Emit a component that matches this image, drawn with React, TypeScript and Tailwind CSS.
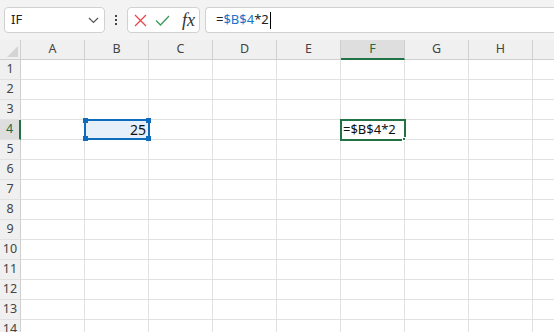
import React from 'react';

const cols = ['A', 'B', 'C', 'D', 'E', 'F', 'G', 'H', 'I'];
const rows = [1, 2, 3, 4, 5, 6, 7, 8, 9, 10, 11, 12, 13, 14];

const FormulaBar: React.FC = () => (
  <div className="flex h-[40px] items-start bg-[#f3f3f3] pt-[7px] pl-[4px]">
    {/* Name box */}
    <div className="flex h-[26px] w-[101px] items-center justify-between rounded-[4px] border border-[#d1d1d1] bg-white pl-[6px] pr-[5px]">
      <span className="text-[13px] text-[#222]">IF</span>
      <svg width="11" height="7" viewBox="0 0 11 7" fill="none">
        <path d="M1 1l4.5 4.5L10 1" stroke="#555" strokeWidth="1.2" />
      </svg>
    </div>
    <div className="flex h-[26px] w-[22px] flex-col items-center justify-center gap-[2px]">
      <span className="h-[2px] w-[2px] bg-[#444]" />
      <span className="h-[2px] w-[2px] bg-[#444]" />
      <span className="h-[2px] w-[2px] bg-[#444]" />
    </div>
    {/* Cancel / enter / fx */}
    <div className="flex h-[26px] w-[73px] items-center rounded-[4px] border border-[#d1d1d1] bg-white pl-[6px]">
      <svg width="13" height="13" viewBox="0 0 13 13" fill="none">
        <path d="M1 1l11 11M12 1L1 12" stroke="#e8474b" strokeWidth="1.3" />
      </svg>
      <svg className="ml-[8px]" width="15" height="11" viewBox="0 0 15 11" fill="none">
        <path d="M1 5.5l4.5 4.5L14 1" stroke="#3b9b5b" strokeWidth="1.3" />
      </svg>
      <span className="ml-[12px] text-[18px] leading-none italic text-[#333]" style={{ fontFamily: '"Liberation Serif", serif' }}>
        fx
      </span>
    </div>
    {/* Formula input */}
    <div className="ml-[5px] flex h-[26px] flex-1 items-center rounded-l-[4px] border border-r-0 border-[#d1d1d1] bg-white pl-[10px] text-[13px]">
      <span className="text-[#222]">=</span>
      <span className="text-[#1a73c8]">$B$4</span>
      <span className="text-[#222]">*2</span>
      <span className="ml-[1px] h-[17px] w-[1px] bg-black" />
    </div>
  </div>
);

const App: React.FC = () => {
  return (
    <div className="h-[332px] w-[554px] overflow-hidden bg-white" style={{ fontFamily: '"Noto Sans", "Open Sans", sans-serif' }}>
      <FormulaBar />
      {/* Column headers */}
      <div className="flex h-[20px] bg-[#f0f0f0]">
        <div className="relative w-[21px] shrink-0 border-r border-b border-[#cfcfcf]">
          <svg className="absolute right-[2px] bottom-[2px]" width="11" height="11" viewBox="0 0 11 11">
            <path d="M11 0V11H0Z" fill="#d4d4d4" />
          </svg>
        </div>
        {cols.map(c => (
          <div
            key={c}
            className={`flex w-[64px] shrink-0 items-center justify-center border-r text-[12.5px] ${
              c === 'F'
                ? 'border-b-2 border-r-[#cfcfcf] border-b-[#217346] bg-[#dedede] text-[#1e6b41]'
                : 'border-b border-[#cfcfcf] text-[#444]'
            }`}
          >
            {c === 'I' ? '' : c}
          </div>
        ))}
      </div>
      {/* Rows */}
      {rows.map(r => (
        <div key={r} className="flex h-[20px]">
          <div
            className={`flex w-[21px] shrink-0 items-center justify-center border-b border-[#e1e1e1] text-[12.5px] ${
              r === 4
                ? 'border-r-2 border-r-[#217346] bg-[#dedede] text-[#1e6b41]'
                : 'border-r border-r-[#cfcfcf] bg-[#f0f0f0] text-[#444]'
            }`}
          >
            {r}
          </div>
          {cols.map(c => {
            if (r === 4 && c === 'B') {
              return (
                <div key={c} className="relative w-[64px] shrink-0 border-r border-b border-[#e1e1e1]">
                  <div className="absolute -top-[1px] -left-[1px] flex h-[21px] w-[66px] items-center justify-end border-2 border-[#0f6cbd] bg-[#e6f0fa] pr-[2px] text-[14px] text-[#111]">
                    25
                  </div>
                  <span className="absolute -top-[2px] -left-[2px] h-[5px] w-[5px] bg-[#0f6cbd]" />
                  <span className="absolute -top-[2px] -right-[3px] h-[5px] w-[5px] bg-[#0f6cbd]" />
                  <span className="absolute -bottom-[2px] -left-[2px] h-[5px] w-[5px] bg-[#0f6cbd]" />
                  <span className="absolute -bottom-[2px] -right-[3px] h-[5px] w-[5px] bg-[#0f6cbd]" />
                </div>
              );
            }
            if (r === 4 && c === 'F') {
              return (
                <div key={c} className="relative w-[64px] shrink-0 border-r border-b border-[#e1e1e1]">
                  <div className="absolute -top-[1px] -left-[1px] flex h-[22px] w-[66px] items-center border-2 border-[#217346] bg-white pl-[1px] text-[13px] whitespace-nowrap text-[#111]">
                    =$B$4*2
                  </div>
                  <span className="absolute -right-[2px] -bottom-[2px] h-[4px] w-[4px] border border-white bg-[#217346]" />
                </div>
              );
            }
            return <div key={c} className="w-[64px] shrink-0 border-r border-b border-[#e1e1e1]" />;
          })}
        </div>
      ))}
    </div>
  );
};

export default App;
